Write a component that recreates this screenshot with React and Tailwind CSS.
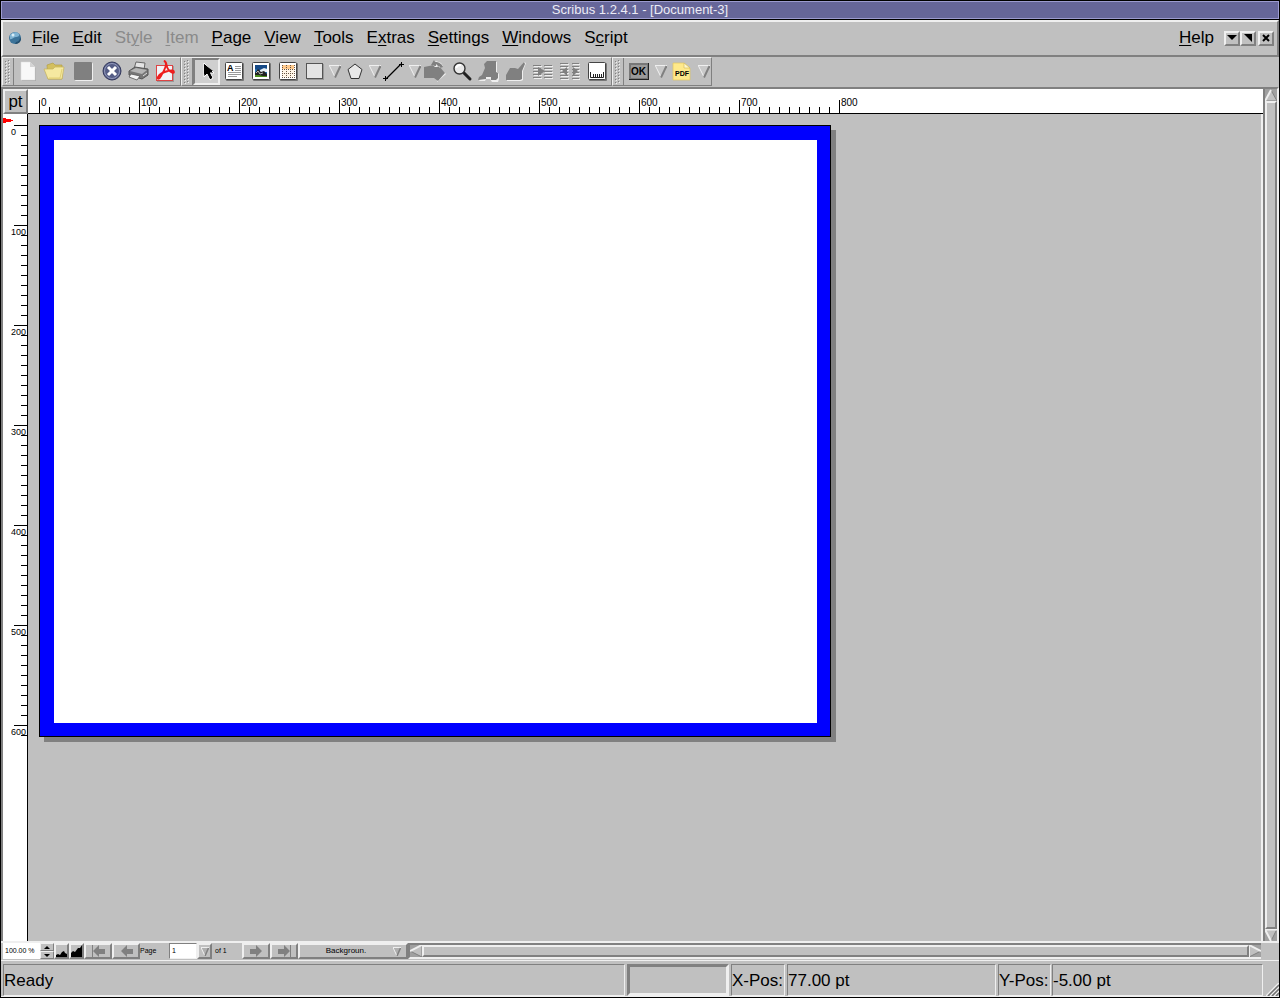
import React, { useState } from "react";

const raised =
  "border border-t-[#efefef] border-l-[#efefef] border-r-[#808080] border-b-[#808080]";
const raised2 =
  "border-2 border-t-[#efefef] border-l-[#efefef] border-r-[#808080] border-b-[#808080]";
const sunken =
  "border border-t-[#808080] border-l-[#808080] border-r-[#efefef] border-b-[#efefef]";

const menus = [
  { before: "", key: "F", after: "ile" },
  { before: "", key: "E", after: "dit" },
  { before: "St", key: "y", after: "le", disabled: true },
  { before: "", key: "I", after: "tem", disabled: true },
  { before: "", key: "P", after: "age" },
  { before: "", key: "V", after: "iew" },
  { before: "", key: "T", after: "ools" },
  { before: "E", key: "x", after: "tras" },
  { before: "", key: "S", after: "ettings" },
  { before: "", key: "W", after: "indows" },
  { before: "S", key: "c", after: "ript" },
];

const MenuItem = ({ item }) => (
  <button
    disabled={item.disabled}
    className="text-[17px] leading-5 text-black disabled:text-[#8a8a8a]"
  >
    {item.before}
    <span className="underline decoration-1 underline-offset-2">{item.key}</span>
    {item.after}
  </button>
);

const Icon = ({ children, w = 24, h = 24 }) => (
  <svg width={w} height={h} viewBox={`0 0 ${w} ${h}`} className="block shrink-0">
    {children}
  </svg>
);

const Frame = ({ fill = "#fff" }) => (
  <>
    <rect x="4" y="4" width="18" height="18" rx="1" fill="#777" />
    <rect x="3.5" y="3.5" width="17" height="17" rx="1" fill={fill} stroke="#444" />
  </>
);

const NewIcon = () => (
  <Icon>
    <path d="M6 4h9l5 5v13H6z" fill="#aaa" />
    <path d="M5 3h9l5 5v13H5z" fill="#f8f8f8" stroke="#ddd" strokeWidth=".5" />
    <path d="M14 3l5 5h-5z" fill="#d4d4d4" />
  </Icon>
);

const OpenIcon = () => (
  <Icon>
    <path d="M4 6l6-2 2 2h7v14H5z" fill="#d3bf5e" stroke="#b39f46" strokeWidth=".7" />
    <path d="M1 10h9l2-2h9l-2 12H5z" fill="#f5e9a0" stroke="#c4b25a" strokeWidth=".7" />
    <path d="M6 19h11l2-9" fill="none" stroke="#e1cf74" />
  </Icon>
);

const SaveIcon = () => (
  <Icon>
    <rect x="4" y="4" width="18" height="18" rx="1" fill="#efefef" />
    <rect x="3" y="3" width="18" height="18" rx="1" fill="#808080" />
  </Icon>
);

const CloseIcon = () => (
  <Icon>
    <circle cx="12" cy="12" r="9" fill="#555d86" stroke="#33385c" />
    <circle cx="12" cy="12" r="7.5" fill="none" stroke="#9299bb" />
    <path d="M8 8l8 8M16 8l-8 8" stroke="#fff" strokeWidth="3" />
  </Icon>
);

const PrintIcon = () => (
  <Icon>
    <path d="M7 10l2-7 9 1-1 7z" fill="#e4e4e4" stroke="#666" />
    <path d="M2 12l6-4 13 2v6l-6 4-13-4z" fill="#777" stroke="#555" />
    <path d="M3 12l6-3 11 2-5 4z" fill="#b5b5b5" />
    <path d="M4 15l9 2-3 4-8-3z" fill="#f4f4f4" stroke="#555" strokeWidth=".8" />
    <path d="M16 17l4-3" stroke="#ddd" />
  </Icon>
);

const AcrobatIcon = () => (
  <Icon>
    <rect x="3" y="7" width="17" height="16" fill="#999" />
    <rect x="2.5" y="6.5" width="16" height="15" fill="#f2f2f6" stroke="#d44" />
    <path
      d="M10 2c3 0 2 5 4 8 2 3 6 5 6 3s-3-2-6-1c-5 1-9 4-10 6s1 3 3-1 5-8 5-12c0-2-2-3-2-3z"
      fill="none"
      stroke="#ee1c1c"
      strokeWidth="1.8"
    />
  </Icon>
);

const ArrowIcon = () => (
  <Icon>
    <path d="M9 4v14l3-3 3 6 3-2-3-5h4z" fill="#000" stroke="#fff" strokeWidth="1" />
    <path d="M9 5v11l3-3 3 6 2-1-3-6h4z" fill="#000" />
  </Icon>
);

const TextIcon = () => (
  <Icon>
    <Frame />
    <text x="5" y="12" className="font-bold text-[9px]">A</text>
    <path d="M13 7.5h6M13 9.5h6M13 11.5h6M6 13.5h13M6 15.5h13M6 17.5h9" stroke="#999" />
  </Icon>
);

const ImageIcon = () => (
  <Icon>
    <Frame />
    <rect x="6" y="6" width="12" height="12" fill="#2675b5" />
    <path d="M6 6h12v3l-6 3-6-2z" fill="#164a87" />
    <path d="M11 11l4-2 3 1v3h-7z" fill="#e7f0f5" />
    <path d="M6 14l3-4 3 3 3-1 3 3v3H6z" fill="#222" />
    <path d="M7 14l2-2 2 3 3-1" stroke="#bbb" fill="none" />
    <path d="M6 16h4l4 1h4v1H6z" fill="#4b8e1d" />
  </Icon>
);

const TableIcon = () => (
  <Icon>
    <Frame />
    <rect x="6" y="6" width="12" height="4" fill="#ffc98c" />
    <rect x="6" y="10" width="12" height="8" fill="#fff6e8" />
    <path
      d="M6 10.5h13M6 14.5h13M6 18.5h13M10.5 6v13M14.5 6v13M6.5 6v13M18.5 6v13"
      stroke="#665544"
      strokeDasharray="1 1"
    />
  </Icon>
);

const ShapeIcon = () => (
  <Icon>
    <rect x="4" y="5" width="17" height="16" fill="#999" />
    <rect x="3.5" y="4.5" width="16" height="15" fill="#e4e4e4" stroke="#555" />
  </Icon>
);

const PolygonIcon = () => (
  <Icon>
    <path d="M12 5l7 5.500-3 9H8l-3-9z" fill="#e8e8e8" stroke="#333" />
  </Icon>
);

const LineIcon = () => (
  <Icon>
    <path d="M3 20L18 5" stroke="#000" strokeWidth="1.3" />
    <path d="M0 19.5h5M2.5 17v5M16 5.500h5M18.500 3v5" stroke="#000" />
  </Icon>
);

const RotateIcon = () => (
  <Icon>
    <path d="M2 9h10v-3l-3 1 4-5 5 2 2 3-4 1 7 7-9 8v-4H3z" fill="#efefef" />
    <path d="M1 8h10v-2M1 8v11h10l4 3 7-8-6-7-2 1H1M8 6l3-5 1 2c4 0 7 2 8 5l-3 1-4-4v2z" fill="#808080" />
  </Icon>
);

const ZoomIcon = () => (
  <Icon>
    <path d="M14 14l6 6" stroke="#222" strokeWidth="3" strokeLinecap="round" />
    <circle cx="9.5" cy="9.5" r="5.5" fill="#e9e9e9" stroke="#333" strokeWidth="1.4" />
    <path d="M6 9c1-3 3-3 5-3" stroke="#fff" strokeWidth="2" fill="none" />
  </Icon>
);

const EditTextIcon = () => (
  <Icon>
    <path d="M4 19l3-4 2-6-1-3 3-3h9v10l2 2v5l-1 3h-6l-2-3H9l-1 2H2z" fill="#efefef" />
    <path d="M1 21l1-3 3-2 3-7-1-4 3-3h9v11l2 1v5l-2 2h-5v-3H9v2z" fill="#808080" />
  </Icon>
);

const EditorIcon = () => (
  <Icon>
    <path d="M3 17l3-7h9l5-7 2 1-3 8v9l-2 1H3z" fill="#efefef" />
    <path d="M2 16l4-7h5l3 1 6-7 1 2-3 7v8l-2 1H2z" fill="#808080" />
  </Icon>
);

const LinkIcon = () => (
  <Icon>
    <path d="M3 7.5h8M3 10.5h8M3 13.5h8M3 16.5h8M3 19.5h8M14 7.5h8M14 10.5h8M14 13.5h8M14 16.5h8M14 19.5h8" stroke="#efefef" />
    <path d="M2 6.5h8M2 9.5h8M2 12.5h8M2 15.5h8M2 18.5h8M13 6.5h8M13 9.5h8M13 12.5h8M13 15.5h8M13 18.5h8" stroke="#808080" />
    <path d="M7 8l7 4-7 5z" fill="#808080" />
  </Icon>
);

const UnlinkIcon = () => (
  <Icon>
    <path d="M3 5.5h8M3 8.5h8M3 11.5h8M3 14.5h8M3 17.5h8M3 20.5h8M15 5.5h7M15 8.5h7M15 11.5h7M15 14.5h7M15 17.5h7M15 20.5h7" stroke="#efefef" />
    <path d="M2 4.5h8M2 7.5h8M2 10.5h8M2 13.5h8M2 16.5h8M2 19.5h8M14 4.5h7M14 7.5h7M14 10.5h7M14 13.5h7M14 16.5h7M14 19.5h7" stroke="#808080" />
    <path d="M9 8v9l-5-5zM15 8v9l5-5z" fill="#808080" />
  </Icon>
);

const MeasureIcon = () => (
  <Icon>
    <Frame />
    <path d="M5.5 13v5.5h13V13M8.5 15v3M10.5 15v3M12.5 15v3M14.5 15v3M16.5 15v3" stroke="#222" fill="none" />
  </Icon>
);

const OkIcon = () => (
  <Icon>
    <rect x="2" y="4" width="20" height="17" fill="#222" />
    <rect x="2" y="4" width="19" height="16" fill="#777" />
    <rect x="4" y="6" width="16" height="13" fill="#9a9a9a" />
    <text x="4" y="16" className="font-bold text-[10px]">OK</text>
  </Icon>
);

const PdfIcon = () => (
  <Icon>
    <path d="M3 4h11l6 5v12H3z" fill="#ffe98a" stroke="#e0c65e" strokeWidth=".7" />
    <path d="M14 4v5h6z" fill="#fff6c8" stroke="#d1b954" strokeWidth=".6" />
    <text x="5" y="17" className="font-bold text-[7px]">PDF</text>
  </Icon>
);

// drop-down marker next to a tool
const DropButton = ({ label }) => (
  <button aria-label={label} className="flex w-[13px] items-center justify-center pb-px">
    <Icon w={12} h={13}>
      <path d="M0 0h12l-6 13z" fill="#c9c9c9" />
      <path d="M0 .5h12M.5 1l5.500 11" stroke="#efefef" />
      <path d="M11.5 1L6 12.5" stroke="#808080" strokeWidth="2" />
    </Icon>
  </button>
);

const ToolButton = ({ label, icon: Glyph, pressed, wide, disabled }) => (
  <button
    aria-label={label}
    disabled={disabled}
    className={
      "flex h-[27px] items-center justify-center overflow-hidden pb-px " +
      (wide ? "w-[30px] " : "w-[27px] ") +
      (pressed
        ? "border-2 border-t-[#808080] border-l-[#808080] border-r-[#efefef] border-b-[#efefef] bg-[#cfcfcf]"
        : "")
    }
  >
    <Glyph />
  </button>
);

const Handle = () => (
  <div className="flex w-[9px] justify-between border-r border-[#808080]">
    <svg width="6" height="27" aria-hidden="true" shapeRendering="crispEdges">
      {[3, 6, 9, 12, 15, 18, 21, 24].map((y) => (
        <g key={y}>
          <rect x="0" y={y} width="1" height="1" fill="#808080" />
          <rect x="1" y={y + 1} width="1" height="1" fill="#efefef" />
          <rect x="3" y={y - 1} width="1" height="1" fill="#808080" />
          <rect x="4" y={y} width="1" height="1" fill="#efefef" />
        </g>
      ))}
    </svg>
  </div>
);

const ToolGroup = ({ children }) => (
  <div className={"flex h-[29px] items-center pl-[2px] pr-px " + raised}>
    <Handle />
    {children}
  </div>
);

const range = (n) => Array.from({ length: n }, (_, i) => i);

const TopRuler = () => (
  <svg className="block h-6 w-full" shapeRendering="crispEdges">
    {range(81).map((i) => {
      const x = 11 + i * 10;
      const major = i % 10 === 0;
      return (
        <g key={i}>
          <rect x={x} y={major ? 11 : 18} width="1" height={major ? 13 : 6} />
          {major && (
            <text x={x + 2} y="17" className="text-[10px]">
              {i * 10}
            </text>
          )}
        </g>
      );
    })}
  </svg>
);

const SideRuler = () => (
  <svg className="block h-full w-6" shapeRendering="crispEdges">
    <path d="M0 4l5 1 5 1v1l-5 1-5 1z" fill="#f00" />
    {range(62).map((i) => {
      const y = 11 + i * 10;
      const major = i % 10 === 0;
      return (
        <g key={i}>
          <rect x={major ? 11 : 18} y={y} width={major ? 13 : 6} height="1" />
          {major && (
            <text x="8" y={y + 10} className="text-[9px]">
              {i * 10}
            </text>
          )}
        </g>
      );
    })}
  </svg>
);

const scrollShapes = {
  up: "M6 1l6 11H0z",
  down: "M0 0h12L6 12z",
  left: "M12 0v12L0 6z",
  right: "M0 0l12 6-12 6z",
};

const scrollEdges = {
  up: ["M6 1L0 12", "M6 1l6 11H0"],
  down: ["M12 .5H0L6 12", "M12 0L6 12"],
  left: ["M12 0L0 6", "M0 6l12 6V0"],
  right: ["M0 12V0l12 6", "M12 6L0 12"],
};

const ScrollArrow = ({ dir }) => (
  <button aria-label={"Scroll " + dir} className="shrink-0">
    <Icon w={12} h={12}>
      <path d={scrollShapes[dir]} fill="#c0c0c0" />
      <path d={scrollEdges[dir][1]} fill="none" stroke="#808080" />
      <path d={scrollEdges[dir][0]} fill="none" stroke="#efefef" strokeWidth="2" />
    </Icon>
  </button>
);

const NavButton = ({ label, flip, bar }) => (
  <button
    aria-label={label}
    className={"flex h-4 w-7 items-center justify-center " + raised2}
  >
    <svg
      width="15"
      height="12"
      viewBox="0 0 15 12"
      className={flip ? "-scale-x-100" : ""}
    >
      <path d="M1 4h6V0l6 6-6 6V9H1z" fill="#808080" />
      {bar && <path d="M13.5 0v12" stroke="#808080" />}
    </svg>
  </button>
);

const SmallTriangle = () => (
  <Icon w={8} h={9}>
    <path d="M0 0h8L4 9z" fill="#b0b0b0" />
    <path d="M8 .5H0L4 9" fill="none" stroke="#efefef" />
    <path d="M7.5 1L4 9" stroke="#808080" strokeWidth="1.5" />
  </Icon>
);

const BottomBar = () => {
  const [zoom, setZoom] = useState("100.00 %");
  const [page, setPage] = useState("1");
  return (
    <div className="flex h-4 items-stretch text-[7px] leading-4">
      <input
        aria-label="Zoom"
        value={zoom}
        onChange={(e) => setZoom(e.target.value)}
        className="w-[37px] bg-white pl-[2px] outline-none"
      />
      <div className="flex w-[14px] flex-col">
        <button aria-label="Zoom in" className={"flex h-2 items-center justify-center " + raised}>
          <Icon w={6} h={3}><path d="M3 0l3 3H0z" /></Icon>
        </button>
        <button aria-label="Zoom out" className={"flex h-2 items-center justify-center " + raised}>
          <Icon w={6} h={3}><path d="M0 0h6L3 3z" /></Icon>
        </button>
      </div>
      <button aria-label="Smaller" className={"flex w-[15px] items-end justify-center " + raised2}>
        <Icon w={11} h={12}><path d="M0 12v-2l2-1 2 1 2-3 2-1 1 2 2 1v3z" /></Icon>
      </button>
      <button aria-label="Larger" className={"flex w-[15px] items-end justify-center " + raised2}>
        <Icon w={11} h={12}><path d="M0 12V8l2-2 2 1 3-4 2 0 2-3v12z" /></Icon>
      </button>
      <NavButton label="First page" flip bar />
      <NavButton label="Previous page" flip />
      <label htmlFor="pageNumber" className="w-[28px]">
        Page
      </label>
      <input
        id="pageNumber"
        value={page}
        onChange={(e) => setPage(e.target.value)}
        className={"ml-px w-[28px] bg-white pl-[2px] outline-none " + sunken}
      />
      <button aria-label="Choose page" className={"flex w-[15px] items-center justify-center " + raised2}>
        <SmallTriangle />
      </button>
      <span className="w-[30px] pl-[3px]">of 1</span>
      <NavButton label="Next page" />
      <NavButton label="Last page" bar />
      <div className="relative w-[110px]">
        <select
          aria-label="Layer"
          className={"block h-4 w-full appearance-none bg-[#c0c0c0] pr-[14px] text-center text-[8px] leading-3 outline-none " + raised2}
        >
          <option>Backgroun.</option>
        </select>
        <span className="pointer-events-none absolute right-[7px] top-1">
          <SmallTriangle />
        </span>
      </div>
      <div className="flex flex-1 items-center border-t-2 border-b-2 border-l-2 border-t-[#808080] border-l-[#808080] border-b-[#efefef] bg-[#a0a0a0]">
        <ScrollArrow dir="left" />
        <div className={"h-3 flex-1 bg-[#c0c0c0] " + raised2} />
        <ScrollArrow dir="right" />
      </div>
    </div>
  );
};

const Field = ({ children, className }) => (
  <div className={"flex items-center whitespace-nowrap pt-[2px] " + sunken + " " + className}>
    {children}
  </div>
);

const windowButton = "flex h-[15px] w-4 items-center justify-center " + raised2;

const App = () => {
  return (
    <div className="flex h-screen flex-col overflow-hidden border border-black bg-[#c0c0c0] font-['Liberation_Sans',Arial,sans-serif] text-black">
      <header className="h-[19px] shrink-0 border-b border-black">
        <h1 className="h-[18px] border border-[#9c9bd0] bg-[#666699] text-center text-[13px] leading-4 text-[#ececf6]">
          Scribus 1.2.4.1 - [Document-3]
        </h1>
      </header>

      <nav className={"flex h-[37px] shrink-0 items-center pl-[5px] pr-[3px] pb-px " + raised2}>
        <Icon w={14} h={14}>
          <circle cx="7" cy="7" r="6" fill="#3c7399" />
          <path d="M2 4c2-3 7-4 9-1 1 2-1 3-3 3S4 9 2 8z" fill="#7fb3d3" />
          <circle cx="5" cy="4" r="1.5" fill="#d8edf7" />
          <path d="M8 11c3 0 4-3 4-5l1 2c0 3-3 5-6 5z" fill="#25506f" />
        </Icon>
        <div className="ml-[10px] flex gap-[13px]">
          {menus.map((item) => (
            <MenuItem key={item.key} item={item} />
          ))}
        </div>
        <div className="ml-auto mr-[10px] flex">
          <MenuItem item={{ before: "", key: "H", after: "elp" }} />
        </div>
        <div className="flex">
          <button aria-label="Minimize" className={windowButton}>
            <Icon w={10} h={6}><path d="M0 0h10L5 5z" /></Icon>
          </button>
          <button aria-label="Restore" className={windowButton}>
            <Icon w={8} h={8}><path d="M0 0h8v8z" /></Icon>
          </button>
          <button aria-label="Close" className={"ml-[2px] " + windowButton}>
            <Icon w={8} h={8}><path d="M1 1l6 6M7 1L1 7" stroke="#000" strokeWidth="2" /></Icon>
          </button>
        </div>
      </nav>

      <div className="flex h-[30px] shrink-0 pl-px">
        <ToolGroup>
          <ToolButton label="New" icon={NewIcon} />
          <ToolButton label="Open" icon={OpenIcon} />
          <ToolButton label="Save" icon={SaveIcon} wide disabled />
          <ToolButton label="Close" icon={CloseIcon} />
          <ToolButton label="Print" icon={PrintIcon} />
          <ToolButton label="Save as PDF" icon={AcrobatIcon} />
        </ToolGroup>
        <ToolGroup>
          <ToolButton label="Select" icon={ArrowIcon} pressed />
          <ToolButton label="Insert text frame" icon={TextIcon} />
          <ToolButton label="Insert picture" icon={ImageIcon} />
          <ToolButton label="Insert table" icon={TableIcon} />
          <ToolButton label="Insert shape" icon={ShapeIcon} />
          <DropButton label="Shapes" />
          <ToolButton label="Insert polygon" icon={PolygonIcon} />
          <DropButton label="Polygon properties" />
          <ToolButton label="Insert line" icon={LineIcon} />
          <DropButton label="Lines" />
          <ToolButton label="Rotate" icon={RotateIcon} disabled />
          <ToolButton label="Zoom" icon={ZoomIcon} />
          <ToolButton label="Edit contents" icon={EditTextIcon} disabled />
          <ToolButton label="Story editor" icon={EditorIcon} disabled />
          <ToolButton label="Link frames" icon={LinkIcon} disabled />
          <ToolButton label="Unlink frames" icon={UnlinkIcon} disabled />
          <ToolButton label="Measure" icon={MeasureIcon} />
        </ToolGroup>
        <ToolGroup>
          <ToolButton label="PDF button field" icon={OkIcon} wide />
          <DropButton label="PDF fields" />
          <ToolButton label="PDF annotation" icon={PdfIcon} wide />
          <DropButton label="PDF annotations" />
        </ToolGroup>
      </div>

      <main className="flex min-h-0 flex-1 border-2 border-t-[#808080] border-l-[#808080] border-r-[#efefef] border-b-0">
        <div className="flex min-w-0 flex-1 flex-col">
          <div className="flex h-[25px] shrink-0">
            <button className={"w-[25px] shrink-0 text-[17px] leading-5 " + raised2}>pt</button>
            <div className="min-w-0 flex-1 border-b border-black bg-white">
              <TopRuler />
            </div>
          </div>
          <div className="flex min-h-0 flex-1">
            <div className="w-[25px] shrink-0 border-r border-black bg-white">
              <SideRuler />
            </div>
            <div className="min-w-0 flex-1 overflow-hidden border-r-2 border-[#efefef] p-[11px]">
              {/* the sheet: blue frame on a landscape letter page, 1pt = 1px */}
              <div className="h-[612px] w-[792px] border border-black bg-[#0000ff] pt-[14px] pr-[13px] pb-[13px] pl-[14px] shadow-[5px_5px_0_#808080]">
                <div className="h-full bg-white" />
              </div>
            </div>
          </div>
        </div>
        <div className="flex w-[14px] flex-col items-center border-l-2 border-l-[#808080] bg-[#a0a0a0]">
          <ScrollArrow dir="up" />
          <div className={"w-3 flex-1 bg-[#c0c0c0] " + raised2} />
          <ScrollArrow dir="down" />
        </div>
      </main>

      <div className="shrink-0 border-t-2 border-[#efefef] pl-[2px] pr-[18px]">
        <BottomBar />
      </div>

      <footer className="mt-px flex h-[37px] shrink-0 border-t border-b border-[#efefef] pt-[3px] pl-[2px] text-[17px]">
        <Field className="flex-1">Ready</Field>
        <div
          role="progressbar"
          aria-label="Progress"
          className="ml-[2px] w-[102px] border-[3px] border-t-[#808080] border-l-[#808080] border-r-[#efefef] border-b-[#efefef]"
        />
        <Field className="ml-[2px] w-[54px]">X-Pos:</Field>
        <Field className="ml-[2px] w-[209px]">77.00 pt</Field>
        <Field className="ml-[2px] w-[53px]">Y-Pos:</Field>
        <Field className="ml-px w-[211px]">-5.00 pt</Field>
        <div className="flex w-4 items-end justify-end">
          <Icon w={13} h={13}>
            <path d="M0 13L13 0M4 13l9-9M8 13l5-5" stroke="#efefef" strokeWidth="1.5" />
            <path d="M2 13L13 2M6 13l7-7M10 13l3-3" stroke="#707070" strokeWidth="1.5" />
          </Icon>
        </div>
      </footer>
    </div>
  );
};

export default App;
